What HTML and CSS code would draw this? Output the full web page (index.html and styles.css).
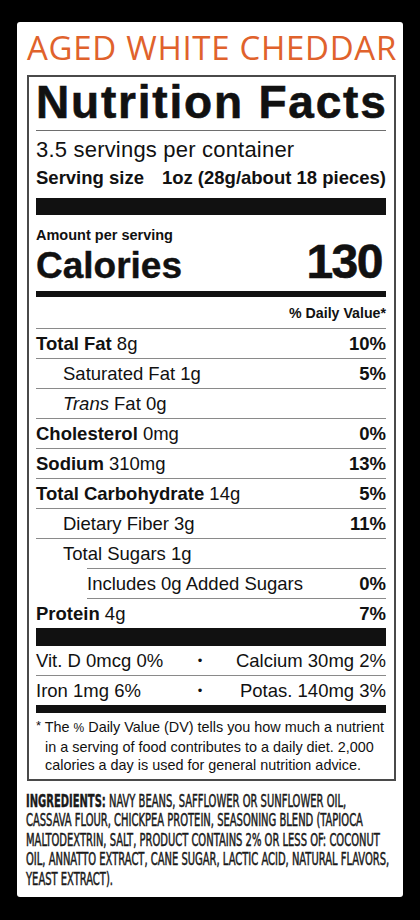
FILE: index.html
```html
<!DOCTYPE html>
<html lang="en">
<head>
  <meta charset="UTF-8" />
  <meta name="viewport" content="width=device-width, initial-scale=1.0"/>
  <title>Aged White Cheddar - Nutrition Facts</title>
  <link rel="stylesheet" href="styles.css">
</head>
<body>
  <div class="card">
    <div class="flavor">AGED WHITE CHEDDAR</div>

    <div class="label">
      <h1>Nutrition Facts</h1>
      <div class="servings">3.5 servings per container</div>
      <div class="serving-size">
        <span>Serving size</span>
        <span>1oz (28g/about 18 pieces)</span>
      </div>
      <div class="bar bar-big"></div>

      <div class="amount">Amount per serving</div>
      <div class="cal-row">
        <span class="cal-word">Calories</span>
        <span class="cal-num">130</span>
      </div>
      <div class="bar bar-mid"></div>

      <div class="dv-head">% Daily Value*</div>

      <div class="row"><span><b>Total Fat</b> 8g</span><b>10%</b></div>
      <div class="row sub"><span>Saturated Fat 1g</span><b>5%</b></div>
      <div class="row sub"><span><i>Trans</i> Fat 0g</span></div>
      <div class="row"><span><b>Cholesterol</b> 0mg</span><b>0%</b></div>
      <div class="row"><span><b>Sodium</b> 310mg</span><b>13%</b></div>
      <div class="row"><span><b>Total Carbohydrate</b> 14g</span><b>5%</b></div>
      <div class="row sub"><span>Dietary Fiber 3g</span><b>11%</b></div>
      <div class="row sub no-line"><span>Total Sugars 1g</span></div>
      <div class="row added"><span>Includes 0g Added Sugars</span><b>0%</b></div>
      <div class="row no-line"><span><b>Protein</b> 4g</span><b>7%</b></div>
      <div class="bar bar-big"></div>

      <div class="vit">
        <span>Vit. D 0mcg 0%</span><span class="dot">•</span><span class="right">Calcium 30mg 2%</span>
      </div>
      <div class="vit no-line">
        <span>Iron 1mg 6%</span><span class="dot">•</span><span class="right">Potas. 140mg 3%</span>
      </div>
      <div class="bar bar-small"></div>

      <p class="footnote"><span class="star">*</span> The <span class="pct">%</span> Daily Value (DV) tells you how much a nutrient<br>in a serving of food contributes to a daily diet. 2,000<br>calories a day is used for general nutrition advice.</p>
    </div>

    <p class="ingredients"><b>INGREDIENTS:</b> NAVY BEANS, SAFFLOWER OR SUNFLOWER OIL,<br>CASSAVA FLOUR, CHICKPEA PROTEIN, SEASONING BLEND (TAPIOCA<br>MALTODEXTRIN, SALT, PRODUCT CONTAINS 2% OR LESS OF: COCONUT<br>OIL, ANNATTO EXTRACT, CANE SUGAR, LACTIC ACID, NATURAL FLAVORS,<br>YEAST EXTRACT).</p>
  </div>
</body>
</html>
```

FILE: styles.css
```css
:root {
  --orange: #e0622c;
  --ink: #111111;
  --rule: #8a8a8a;
  --frame: #4a4a4a;
}
body {
  margin: 0;
  background-color: #000;
  font-family: 'Liberation Sans', Arial, sans-serif;
  color: var(--ink);
}
.card {
  width: 386px;
  height: 875px;
  box-sizing: border-box;
  margin: 22px 0 0 17px;
  padding: 8px 7px 0 10px;
  background-color: #fff;
  border-radius: 3px;
}
.flavor {
  font-family: 'Open Sans', sans-serif;
  font-size: 33px;
  line-height: 36px;
  letter-spacing: 0.7px;
  color: var(--orange);
  text-align: center;
  white-space: nowrap;
}
.label {
  margin-top: 9px;
  border: 2px solid var(--frame);
  padding: 0 8px 4px 7px;
}
h1 {
  margin: 0;
  padding: 2px 0 5px;
  font-size: 46px;
  line-height: 46px;
  letter-spacing: 1.8px;
  font-weight: 700;
  -webkit-text-stroke: 0.6px var(--ink);
  border-bottom: 1px solid #6e6e6e;
  white-space: nowrap;
}
.servings {
  margin-top: 6px;
  font-size: 22px;
  line-height: 26px;
  letter-spacing: 0.2px;
}
.serving-size {
  display: flex;
  justify-content: space-between;
  margin-top: 3px;
  font-size: 18.5px;
  line-height: 24px;
  font-weight: 700;
}
.bar { background-color: var(--ink); }
.bar-big { height: 17px; margin-top: 8px; }
.bar-mid { height: 6px; }
.bar-small { height: 8px; }
.row + .bar-big { margin-top: 0; height: 18px; }
.amount {
  margin-top: 13px;
  font-size: 14.5px;
  line-height: 14px;
  font-weight: 700;
}
.cal-row {
  display: flex;
  justify-content: space-between;
  align-items: baseline;
  height: 49px;
  font-weight: 700;
}
.cal-word {
  font-size: 37px;
  line-height: 40px;
  -webkit-text-stroke: 0.4px var(--ink);
}
.cal-num {
  font-size: 48px;
  line-height: 40px;
  letter-spacing: -1.5px;
  margin-right: 4px;
  -webkit-text-stroke: 0.6px var(--ink);
}
.dv-head {
  margin-top: 6px;
  padding-bottom: 5px;
  border-bottom: 1px solid var(--rule);
  font-size: 14.2px;
  line-height: 20px;
  font-weight: 700;
  text-align: right;
}
.row {
  display: flex;
  justify-content: space-between;
  font-size: 18.5px;
  line-height: 29px;
  border-bottom: 1px solid var(--rule);
  white-space: nowrap;
}
.row.sub { padding-left: 27px; }
.row.no-line { border-bottom: none; }
.row.added {
  margin-left: 51px;
  border-top: 1px solid var(--rule);
}
.vit {
  display: grid;
  grid-template-columns: 150px 28px 1fr;
  font-size: 18.5px;
  line-height: 29px;
  border-bottom: 1px solid var(--rule);
  white-space: nowrap;
}
.vit.no-line { border-bottom: none; }
.vit .dot { text-align: center; font-size: 13px; }
.vit .right { text-align: right; }
.footnote {
  margin: 4px 0 0;
  padding-left: 9px;
  text-indent: -9px;
  font-size: 14.4px;
  line-height: 18.5px;
  white-space: nowrap;
}
.footnote .star { font-size: 13px; vertical-align: 2px; }
.footnote .pct { font-size: 12px; }
.ingredients {
  width: 560px;
  margin: 11px 0 0 -1px;
  font-family: 'Liberation Sans Narrow', 'DejaVu Sans Condensed', 'Liberation Sans', sans-serif;
  font-size: 16.8px;
  line-height: 19.5px;
  color: #1a1a1a;
  white-space: nowrap;
  transform: scaleX(0.66);
  transform-origin: left top;
  -webkit-text-stroke: 0.5px #1a1a1a;
}
.ingredients b { -webkit-text-stroke: 0.4px #1a1a1a; }
```
